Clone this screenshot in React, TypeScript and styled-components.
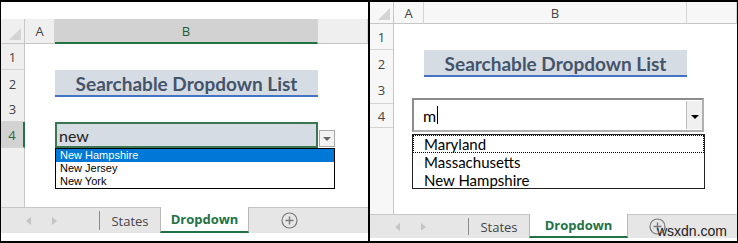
import React from "react";
import styled, { createGlobalStyle, css } from "styled-components";

const Global = createGlobalStyle`
  html, body { margin: 0; padding: 0; background: #fff; }
  body { font-family: "Open Sans", "Noto Sans", sans-serif; }
  * { box-sizing: border-box; }
`;

const Frame = styled.div`
  width: 738px;
  height: 243px;
  display: flex;
  border: 1px solid #000;
  border-top-width: 2px;
  border-bottom-width: 2px;
  background: #fff;
  overflow: hidden;
`;

const Panel = styled.div<{ $w?: number; $divider?: boolean }>`
  display: flex;
  flex-direction: column;
  ${(p) => (p.$w ? `width: ${p.$w}px; flex: none;` : "flex: 1;")}
  ${(p) => p.$divider && "border-right: 2px solid #000;"}
  position: relative;
`;

const Blank = styled.div<{ $h: number }>`
  height: ${(p) => p.$h}px;
  flex: none;
  background: #fff;
`;

const GridRow = styled.div<{ $h: number; $cols: string }>`
  display: grid;
  grid-template-columns: ${(p) => p.$cols};
  height: ${(p) => p.$h}px;
  flex: none;
`;

const HeadCell = styled.div<{ $sel?: boolean; $light?: boolean }>`
  display: flex;
  align-items: center;
  justify-content: center;
  font-family: "Open Sans", sans-serif;
  font-size: 13px;
  color: #444;
  background: ${(p) => (p.$light ? "#f7f7f7" : "#efefef")};
  border-right: 1px solid #d4d4d4;
  border-bottom: 1px solid #c6c6c6;
  ${(p) =>
    p.$sel &&
    css`
      background: #d2d2d2;
      color: #1d5b36;
      border-bottom: 2px solid #217346;
    `}
`;

const Corner = styled.div<{ $light?: boolean }>`
  position: relative;
  background: ${(p) => (p.$light ? "#f7f7f7" : "#efefef")};
  border-right: 1px solid #c6c6c6;
  border-bottom: 1px solid #c6c6c6;
  &::after {
    content: "";
    position: absolute;
    right: 3px;
    bottom: 3px;
    border-style: solid;
    border-width: 0 0 12px 12px;
    border-color: transparent transparent #d4d4d4 transparent;
  }
`;

const RowHead = styled.div<{ $sel?: boolean; $light?: boolean }>`
  display: flex;
  align-items: center;
  justify-content: center;
  font-family: "Open Sans", sans-serif;
  font-size: 13px;
  color: #444;
  background: ${(p) => (p.$light ? "#f7f7f7" : "#efefef")};
  border-right: 1px solid #c6c6c6;
  border-bottom: 1px solid #d4d4d4;
  ${(p) =>
    p.$sel &&
    css`
      background: #d2d2d2;
      color: #2a6b44;
      border-right: 2px solid #217346;
    `}
`;

const Cell = styled.div`
  background: #fff;
`;

const TitleCell = styled.div`
  display: flex;
  align-items: center;
  justify-content: center;
  background: #d6dce4;
  border-bottom: 3px solid #4472c4;
  font-family: "Lato", sans-serif;
  font-weight: 700;
  font-size: 19px;
  color: #44546a;
  padding-top: 2px;
`;

const InputCell = styled.div`
  display: flex;
  align-items: center;
  background: #d6dce4;
  border: 2px solid #3b7650;
  padding-left: 2px;
  font-family: "Lato", sans-serif;
  font-size: 16px;
  color: #222;
`;

const Body = styled.div`
  position: relative;
  display: flex;
  flex-direction: column;
  flex: 1;
`;

const Filler = styled.div<{ $cols: string }>`
  flex: 1;
  display: grid;
  grid-template-columns: ${(p) => p.$cols};
`;

const FillerHead = styled.div<{ $light?: boolean }>`
  background: ${(p) => (p.$light ? "#f7f7f7" : "#efefef")};
  border-right: 1px solid #c6c6c6;
`;

/* tab bar */
const TabBar = styled.div<{ $h: number }>`
  height: ${(p) => p.$h}px;
  flex: none;
  display: flex;
  align-items: stretch;
  background: #e6e6e6;
  border-top: 1px solid #c6c6c6;
  font-family: "Open Sans", sans-serif;
  font-size: 13px;
`;

const NavArea = styled.div`
  width: 99px;
  flex: none;
  display: flex;
  align-items: center;
  padding-left: 25px;
  gap: 21px;
  border-right: 1px solid #8a8a8a;
  margin: 3px 0;
`;

const NavArrow = styled.span<{ $dir: "l" | "r" }>`
  width: 0;
  height: 0;
  border-top: 4px solid transparent;
  border-bottom: 4px solid transparent;
  ${(p) =>
    p.$dir === "l"
      ? "border-right: 5px solid #c4c4c4;"
      : "border-left: 5px solid #c4c4c4;"}
`;

const Tab = styled.div<{ $w: number; $active?: boolean }>`
  width: ${(p) => p.$w}px;
  flex: none;
  display: flex;
  align-items: center;
  justify-content: center;
  color: #444;
  ${(p) =>
    p.$active &&
    css`
      background: #fff;
      color: #217346;
      font-weight: 700;
      border-left: 1px solid #b8b8b8;
      border-right: 1px solid #b8b8b8;
      border-bottom: 2px solid #217346;
      margin-top: -1px;
    `}
`;

const PlusWrap = styled.div<{ $ml: number }>`
  margin-left: ${(p) => p.$ml}px;
  display: flex;
  align-items: center;
`;

const PlusIcon = () => (
  <svg width="17" height="17" viewBox="0 0 17 17">
    <circle cx="8.5" cy="8.5" r="7.5" fill="none" stroke="#7a7a7a" strokeWidth="1.2" />
    <path d="M8.5 4.5v8M4.5 8.5h8" stroke="#7a7a7a" strokeWidth="1.4" />
  </svg>
);

/* overlays */
const DropBtn = styled.div`
  position: absolute;
  left: 318px;
  top: 86px;
  width: 16px;
  height: 17px;
  background: #f3f3f3;
  border: 1px solid #a8a8a8;
  display: flex;
  align-items: center;
  justify-content: center;
  &::after {
    content: "";
    border-left: 4px solid transparent;
    border-right: 4px solid transparent;
    border-top: 4px solid #666;
  }
`;

const SmallList = styled.div`
  position: absolute;
  left: 54px;
  top: 104px;
  width: 280px;
  height: 41px;
  border: 1px solid #000;
  background: #fff;
  font-family: "Liberation Sans", Arial, sans-serif;
  font-size: 11px;
  color: #000;
`;

const SmallItem = styled.div<{ $hl?: boolean }>`
  height: 13px;
  line-height: 13px;
  padding-left: 4px;
  ${(p) => p.$hl && "background: #0078d7; color: #fff;"}
`;

const Combo = styled.div`
  position: absolute;
  left: 42px;
  top: 74px;
  width: 292px;
  height: 34px;
  display: flex;
  border: 2px solid #8c8c8c;
  border-right-color: #b0b0b0;
  border-bottom-color: #b0b0b0;
  background: #fff;
`;

const ComboText = styled.div`
  flex: 1;
  display: flex;
  align-items: center;
  padding-left: 9px;
  font-family: "Lato", sans-serif;
  font-size: 16px;
  color: #000;
`;

const Caret = styled.span`
  display: inline-block;
  width: 1px;
  height: 18px;
  background: #000;
  margin-left: 1px;
`;

const ComboBtn = styled.div`
  width: 16px;
  flex: none;
  margin: 1px 0 1px 0;
  background: #f0f0f0;
  border-left: 1px solid #bdbdbd;
  display: flex;
  align-items: center;
  justify-content: center;
  &::after {
    content: "";
    border-left: 4px solid transparent;
    border-right: 4px solid transparent;
    border-top: 4px solid #000;
    margin-top: 3px;
  }
`;

const BigList = styled.div`
  position: absolute;
  left: 42px;
  top: 110px;
  width: 293px;
  height: 55px;
  border: 1px solid #222;
  background: #fff;
  font-family: "Lato", sans-serif;
  font-size: 15px;
  color: #000;
`;

const BigItem = styled.div<{ $focus?: boolean }>`
  height: 18px;
  line-height: 18px;
  padding-left: 11px;
  ${(p) => p.$focus && "outline: 1px dotted #000; outline-offset: -1px;"}
`;

const Watermark = styled.div`
  position: absolute;
  right: 10px;
  bottom: 2px;
  font-family: "Liberation Sans", Arial, sans-serif;
  font-size: 14px;
  color: #222;
`;

const LCOLS = "24px 30px 263px 1fr";
const RCOLS = "24px 30px 263px 1fr";

export default function App() {
  return (
    <>
      <Global />
      <Frame>
        <Panel $w={369} $divider>
          <Blank $h={17} />
          <GridRow $h={25} $cols={LCOLS}>
            <Corner />
            <HeadCell>A</HeadCell>
            <HeadCell $sel>B</HeadCell>
            <HeadCell />
          </GridRow>
          <Body>
            <GridRow $h={26} $cols={LCOLS}>
              <RowHead>1</RowHead>
              <Cell />
              <Cell />
              <Cell />
            </GridRow>
            <GridRow $h={27} $cols={LCOLS}>
              <RowHead>2</RowHead>
              <Cell />
              <TitleCell>Searchable Dropdown List</TitleCell>
              <Cell />
            </GridRow>
            <GridRow $h={25} $cols={LCOLS}>
              <RowHead>3</RowHead>
              <Cell />
              <Cell />
              <Cell />
            </GridRow>
            <GridRow $h={26} $cols={LCOLS}>
              <RowHead $sel>4</RowHead>
              <Cell />
              <InputCell>new</InputCell>
              <Cell />
            </GridRow>
            <Filler $cols={LCOLS}>
              <FillerHead />
            </Filler>
            <DropBtn />
            <SmallList>
              <SmallItem $hl>New Hampshire</SmallItem>
              <SmallItem>New Jersey</SmallItem>
              <SmallItem>New York</SmallItem>
            </SmallList>
          </Body>
          <TabBar $h={26}>
            <NavArea>
              <NavArrow $dir="l" />
              <NavArrow $dir="r" />
            </NavArea>
            <Tab $w={60}>States</Tab>
            <Tab $w={89} $active>
              Dropdown
            </Tab>
            <PlusWrap $ml={32}>
              <PlusIcon />
            </PlusWrap>
          </TabBar>
          <Blank $h={8} />
        </Panel>

        <Panel>
          <GridRow $h={22} $cols={RCOLS}>
            <Corner $light />
            <HeadCell $light>A</HeadCell>
            <HeadCell $light>B</HeadCell>
            <HeadCell $light />
          </GridRow>
          <Body>
            <GridRow $h={26} $cols={RCOLS}>
              <RowHead $light>1</RowHead>
              <Cell />
              <Cell />
              <Cell />
            </GridRow>
            <GridRow $h={27} $cols={RCOLS}>
              <RowHead $light>2</RowHead>
              <Cell />
              <TitleCell>Searchable Dropdown List</TitleCell>
              <Cell />
            </GridRow>
            <GridRow $h={27} $cols={RCOLS}>
              <RowHead $light>3</RowHead>
              <Cell />
              <Cell />
              <Cell />
            </GridRow>
            <GridRow $h={24} $cols={RCOLS}>
              <RowHead $light>4</RowHead>
              <Cell />
              <Cell />
              <Cell />
            </GridRow>
            <Filler $cols={RCOLS}>
              <FillerHead $light />
            </Filler>
            <Combo>
              <ComboText>
                m<Caret />
              </ComboText>
              <ComboBtn />
            </Combo>
            <BigList>
              <BigItem $focus>Maryland</BigItem>
              <BigItem>Massachusetts</BigItem>
              <BigItem>New Hampshire</BigItem>
            </BigList>
          </Body>
          <TabBar $h={24}>
            <NavArea>
              <NavArrow $dir="l" />
              <NavArrow $dir="r" />
            </NavArea>
            <Tab $w={60}>States</Tab>
            <Tab $w={99} $active>
              Dropdown
            </Tab>
            <PlusWrap $ml={21}>
              <PlusIcon />
            </PlusWrap>
          </TabBar>
          <Blank $h={3} />
          <Watermark>wsxdn.com</Watermark>
        </Panel>
      </Frame>
    </>
  );
}
